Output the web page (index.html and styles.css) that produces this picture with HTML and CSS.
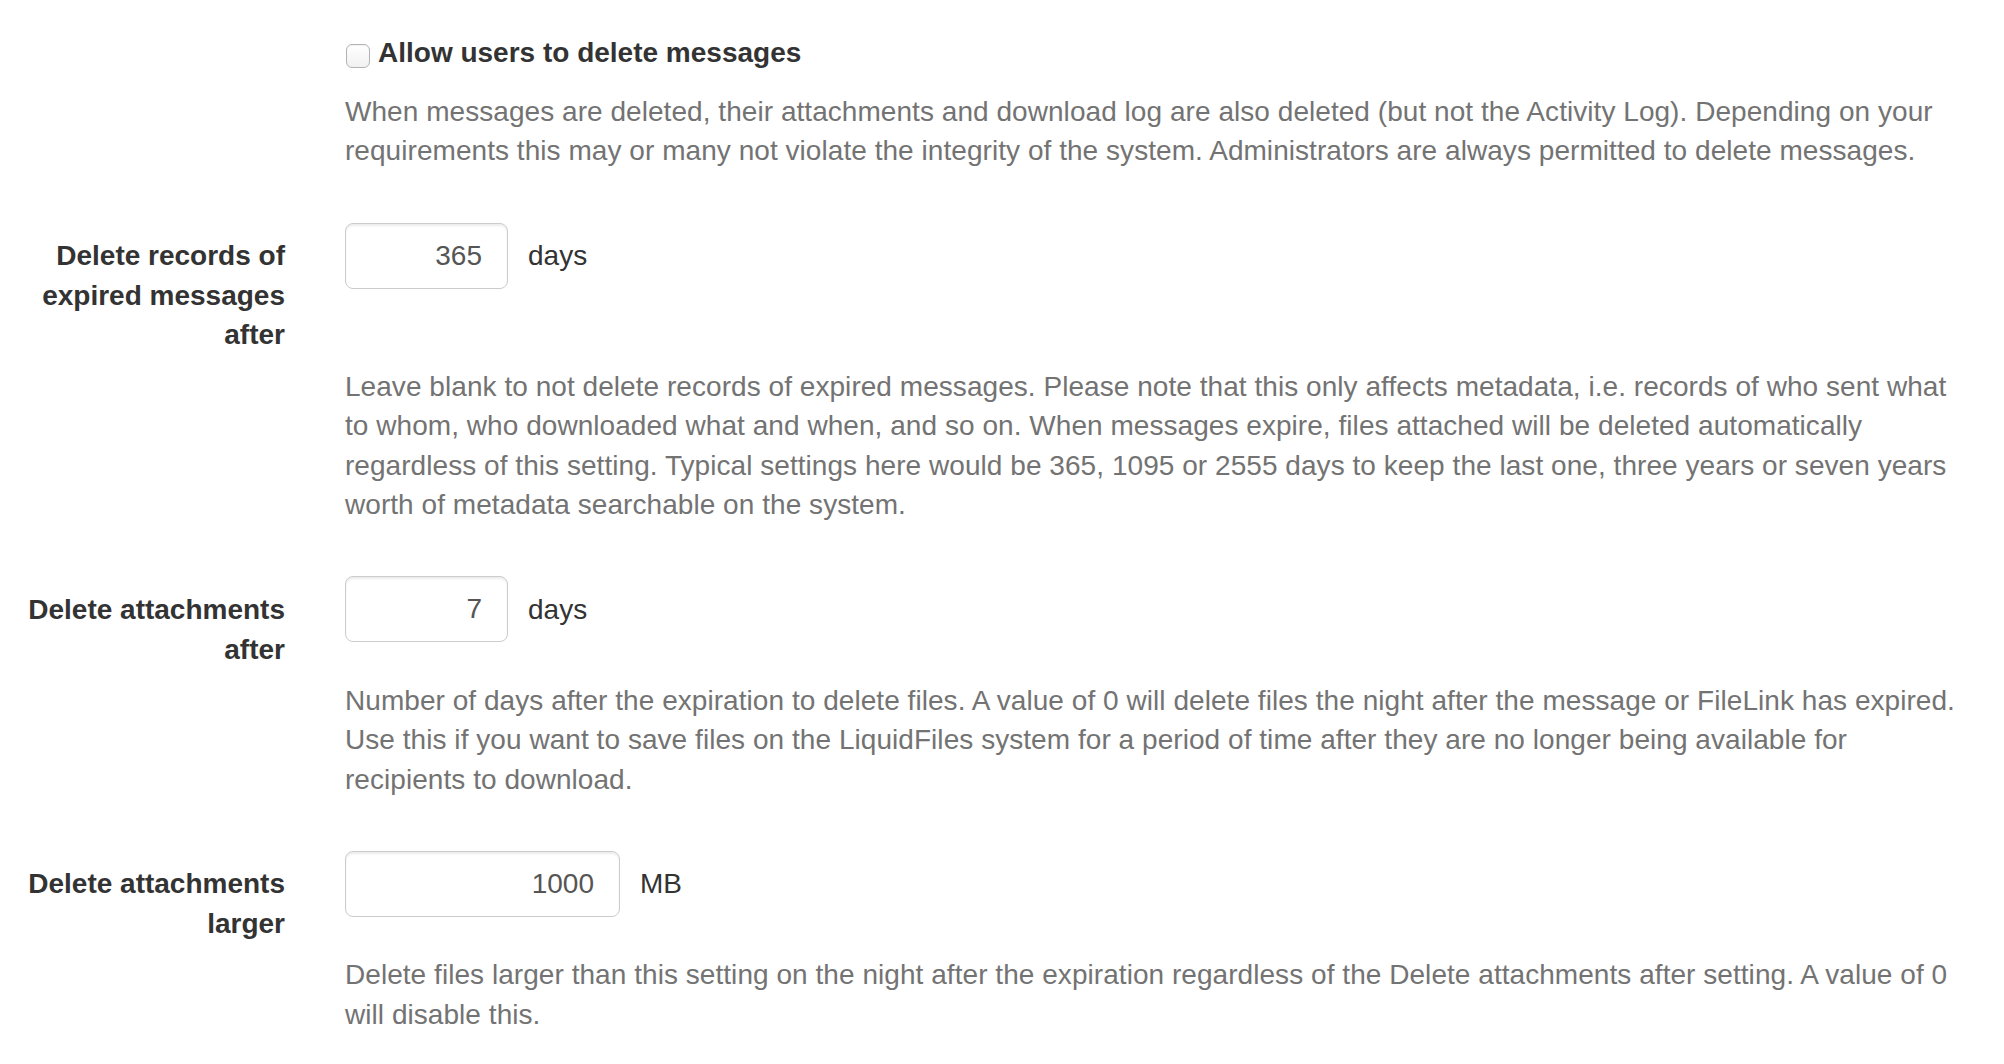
FILE: index.html
```html
<!DOCTYPE html>
<html lang="en">
<head>
<meta charset="utf-8">
<title>Message deletion settings</title>
<link rel="stylesheet" href="styles.css">
</head>
<body>
<form class="settings">
  <div class="group group-check">
    <div class="controls">
      <label class="check"><input type="checkbox" class="checkbox"><span>Allow users to delete messages</span></label>
    </div>
    <p class="help">When messages are deleted, their attachments and download log are also deleted (but not the Activity Log). Depending on your requirements this may or many not violate the integrity of the system. Administrators are always permitted to delete messages.</p>
  </div>

  <div class="group">
    <label class="label" for="f-records">Delete records of expired messages after</label>
    <div class="controls">
      <input id="f-records" class="num num-short" type="text" value="365">
      <span class="unit">days</span>
    </div>
    <p class="help">Leave blank to not delete records of expired messages. Please note that this only affects metadata, i.e. records of who sent what to whom, who downloaded what and when, and so on. When messages expire, files attached will be deleted automatically regardless of this setting. Typical settings here would be 365, 1095 or 2555 days to keep the last one, three years or seven years worth of metadata searchable on the system.</p>
  </div>

  <div class="group">
    <label class="label" for="f-attach">Delete attachments after</label>
    <div class="controls">
      <input id="f-attach" class="num num-short" type="text" value="7">
      <span class="unit">days</span>
    </div>
    <p class="help">Number of days after the expiration to delete files. A value of 0 will delete files the night after the message or FileLink has expired. Use this if you want to save files on the LiquidFiles system for a period of time after they are no longer being available for recipients to download.</p>
  </div>

  <div class="group">
    <label class="label" for="f-larger">Delete attachments larger</label>
    <div class="controls">
      <input id="f-larger" class="num num-long" type="text" value="1000">
      <span class="unit">MB</span>
    </div>
    <p class="help">Delete files larger than this setting on the night after the expiration regardless of the Delete attachments after setting. A value of 0 will disable this.</p>
  </div>
</form>
</body>
</html>
```

FILE: styles.css
```css
html, body {
  margin: 0;
  padding: 0;
  background: #ffffff;
}

body {
  font-family: "Liberation Sans", Arial, Helvetica, sans-serif;
  font-size: 28px;
  line-height: 39.6px;
  color: #333333;
}

.settings {
  padding-top: 33px;
}

.group {
  display: grid;
  grid-template-columns: 285px 1612px;
  column-gap: 60px;
  margin-bottom: 51.5px;
}

.group-check {
  margin-bottom: 52px;
}

.label {
  grid-column: 1;
  grid-row: 1;
  padding-top: 13.5px;
  font-weight: bold;
  text-align: right;
}

.controls {
  grid-column: 2;
  grid-row: 1;
  display: flex;
  align-items: center;
  gap: 20px;
  align-self: start;
}

.help {
  grid-column: 2;
  grid-row: 2;
  margin: 11.5px 0 0;
  color: #737373;
  letter-spacing: 0.05px;
}

.group-check .help {
  margin-top: 19px;
}

.check {
  display: flex;
  align-items: center;
  gap: 8px;
  font-weight: bold;
}

.checkbox {
  appearance: none;
  -webkit-appearance: none;
  width: 24px;
  height: 24px;
  margin: 6px 0 0 1px;
  border: 1.5px solid #b3b3b3;
  border-radius: 6px;
  background: linear-gradient(#ffffff, #f1f1f1);
  box-shadow: inset 0 1px 1px rgba(0, 0, 0, 0.05);
  flex: none;
}

.num {
  box-sizing: border-box;
  height: 66px;
  padding: 0 25px 0 12px;
  border: 1.5px solid #cccccc;
  border-radius: 8px;
  box-shadow: inset 0 2px 2px rgba(0, 0, 0, 0.075);
  font-family: inherit;
  font-size: 28px;
  color: #555555;
  text-align: right;
  background: #ffffff;
  outline: none;
}

.num-short {
  width: 163px;
}

.num-long {
  width: 275px;
}

.unit {
  color: #333333;
}
```
